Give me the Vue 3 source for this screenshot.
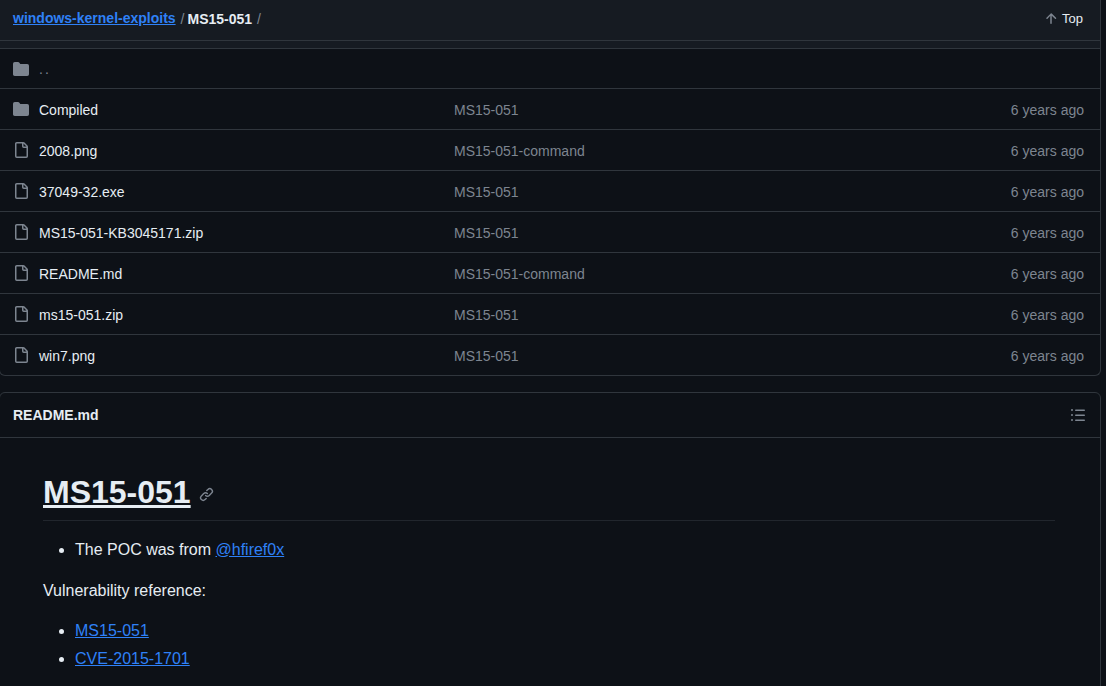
<template>
  <div class="page">
    <section class="box">
      <header class="crumbs">
        <nav class="path">
          <a class="repo" href="#">windows-kernel-exploits</a>
          <span class="sep">/</span>
          <strong class="current">MS15-051</strong>
          <span class="sep">/</span>
        </nav>
        <a class="top" href="#">
          <svg class="icon" viewBox="0 0 16 16" width="16" height="16"><path :d="icons.arrowUp" /></svg>
          <span>Top</span>
        </a>
      </header>
      <div class="strip"></div>

      <div class="row row-up">
        <svg class="icon" viewBox="0 0 16 16" width="16" height="16"><path :d="icons.folder" /></svg>
        <span class="dots">..</span>
      </div>
      <div v-for="file in files" :key="file.name" class="row">
        <svg class="icon" viewBox="0 0 16 16" width="16" height="16"><path :d="file.dir ? icons.folder : icons.file" /></svg>
        <span class="name">{{ file.name }}</span>
        <span class="msg">{{ file.msg }}</span>
        <span class="age">6 years ago</span>
      </div>
    </section>

    <section class="box readme">
      <header class="readme-head">
        <span class="readme-title">README.md</span>
        <svg class="icon" viewBox="0 0 16 16" width="16" height="16"><path :d="icons.list" /></svg>
      </header>
      <article class="body">
        <h1>
          <a class="title-link" href="#">MS15-051</a>
          <svg class="anchor" viewBox="0 0 16 16" width="15" height="15"><path :d="icons.link" /></svg>
        </h1>
        <ul class="poc">
          <li>The POC was from <a href="#">@hfiref0x</a></li>
        </ul>
        <p>Vulnerability reference:</p>
        <ul>
          <li><a href="#">MS15-051</a></li>
          <li><a href="#">CVE-2015-1701</a></li>
        </ul>
      </article>
    </section>
  </div>
</template>

<script setup>
const icons = {
  folder: 'M1.75 1A1.75 1.75 0 0 0 0 2.75v10.5C0 14.216.784 15 1.75 15h12.5A1.75 1.75 0 0 0 16 13.25v-8.5A1.75 1.75 0 0 0 14.25 3H7.5a.25.25 0 0 1-.2-.1l-.9-1.2C6.07 1.26 5.55 1 5 1H1.75Z',
  file: 'M2 1.75C2 .784 2.784 0 3.75 0h6.586c.464 0 .909.184 1.237.513l2.914 2.914c.329.328.513.773.513 1.237v9.586A1.75 1.75 0 0 1 13.25 16h-9.5A1.75 1.75 0 0 1 2 14.25Zm1.75-.25a.25.25 0 0 0-.25.25v12.5c0 .138.112.25.25.25h9.5a.25.25 0 0 0 .25-.25V6h-2.75A1.75 1.75 0 0 1 9 4.25V1.5Zm6.75.062V4.25c0 .138.112.25.25.25h2.688l-.011-.013-2.914-2.914-.013-.011Z',
  arrowUp: 'M3.47 7.78a.75.75 0 0 1 0-1.06l4.25-4.25a.75.75 0 0 1 1.06 0l4.25 4.25a.751.751 0 0 1-.018 1.042.751.751 0 0 1-1.042.018L8.75 4.81v7.44a.75.75 0 0 1-1.5 0V4.81L4.53 7.78a.75.75 0 0 1-1.06 0Z',
  list: 'M5.75 2.5h8.5a.75.75 0 0 1 0 1.5h-8.5a.75.75 0 0 1 0-1.5Zm0 5h8.5a.75.75 0 0 1 0 1.5h-8.5a.75.75 0 0 1 0-1.5Zm0 5h8.5a.75.75 0 0 1 0 1.5h-8.5a.75.75 0 0 1 0-1.5ZM2 14a1 1 0 1 1 0-2 1 1 0 0 1 0 2Zm1-6a1 1 0 1 1-2 0 1 1 0 0 1 2 0ZM2 4a1 1 0 1 1 0-2 1 1 0 0 1 0 2Z',
  link: 'm7.775 3.275 1.25-1.25a3.5 3.5 0 1 1 4.95 4.95l-2.5 2.5a3.5 3.5 0 0 1-4.95 0 .751.751 0 0 1 .018-1.042.751.751 0 0 1 1.042-.018 1.998 1.998 0 0 0 2.83 0l2.5-2.5a2.002 2.002 0 0 0-2.83-2.83l-1.25 1.25a.751.751 0 0 1-1.042-.018.751.751 0 0 1-.018-1.042Zm-4.69 9.64a1.998 1.998 0 0 0 2.83 0l1.25-1.25a.751.751 0 0 1 1.042.018.751.751 0 0 1 .018 1.042l-1.25 1.25a3.5 3.5 0 1 1-4.95-4.95l2.5-2.5a3.5 3.5 0 0 1 4.95 0 .751.751 0 0 1-.018 1.042.751.751 0 0 1-1.042.018 1.998 1.998 0 0 0-2.83 0l-2.5 2.5a1.998 1.998 0 0 0 0 2.83Z',
}

const files = [
  { name: 'Compiled', msg: 'MS15-051', dir: true },
  { name: '2008.png', msg: 'MS15-051-command' },
  { name: '37049-32.exe', msg: 'MS15-051' },
  { name: 'MS15-051-KB3045171.zip', msg: 'MS15-051' },
  { name: 'README.md', msg: 'MS15-051-command' },
  { name: 'ms15-051.zip', msg: 'MS15-051' },
  { name: 'win7.png', msg: 'MS15-051' },
]
</script>

<style>
html,
body {
  margin: 0;
  background: #0d1117;
}
</style>

<style scoped>
.page {
  width: 1101px;
  height: 686px;
  overflow: hidden;
  font-family: "Liberation Sans", Arial, sans-serif;
  font-size: 14px;
  color: #e6edf3;
  background: #0d1117;
}

a {
  color: #2f81f7;
}

.icon {
  display: block;
  fill: #7d8590;
}

.box {
  margin-left: -1px;
  border: 1px solid #30363d;
  border-top: 0;
  border-radius: 0 0 6px 6px;
}

.crumbs {
  height: 40px;
  display: flex;
  align-items: center;
  justify-content: space-between;
  padding: 0 17px 0 13px;
  background: #161b22;
  border-bottom: 1px solid #30363d;
}

.path {
  display: flex;
  align-items: center;
  margin-top: -4px;
}

.repo {
  font-weight: 700;
  font-size: 14px;
}

.sep {
  margin: 2px 3px 0 5px;
  color: #7d8590;
  font-size: 14px;
}

.current {
  margin-top: 2px;
  font-size: 14px;
  font-weight: 700;
  color: #e6edf3;
}

.top {
  display: flex;
  align-items: center;
  gap: 3px;
  font-size: 13px;
  color: #e6edf3;
  text-decoration: none;
  margin-top: -3px;
}

.strip {
  height: 7px;
  background: #161b22;
  border-bottom: 1px solid #30363d;
}

.row {
  height: 40px;
  display: grid;
  grid-template-columns: 26px 415px 1fr auto;
  align-items: center;
  padding: 0 16px 0 13px;
  border-bottom: 1px solid #30363d;
}

.row:last-child {
  border-bottom: 0;
}

.row-up {
  height: 39px;
}

.dots {
  color: #7d8590;
  letter-spacing: 2px;
}

.name {
  padding-top: 2px;
  color: #e6edf3;
}

.msg,
.age {
  padding-top: 2px;
  color: #7d8590;
}

.readme {
  margin-top: 16px;
  border-top: 1px solid #30363d;
  border-radius: 6px 6px 0 0;
}

.readme-head {
  height: 44px;
  display: flex;
  align-items: center;
  justify-content: space-between;
  padding: 0 14px 0 13px;
  border-bottom: 1px solid #30363d;
}

.readme-title {
  font-weight: 700;
  font-size: 14px;
}

.body {
  padding: 32px 45px 32px 43px;
  font-size: 16px;
  line-height: 24px;
}

h1 {
  display: flex;
  align-items: center;
  gap: 8px;
  margin: 0 0 17px;
  padding: 2px 0 7.6px;
  border-bottom: 1px solid #21262d;
  font-size: 32px;
  line-height: 40px;
  font-weight: 700;
}

.title-link {
  color: #e6edf3;
}

.anchor {
  fill: #7d8590;
  margin-top: 5px;
}

ul {
  margin: 0 0 16px;
  padding-left: 32px;
}

.poc {
  margin-bottom: 17px;
}

li + li {
  margin-top: 4px;
}

p {
  margin: 0 0 16px;
}
</style>
